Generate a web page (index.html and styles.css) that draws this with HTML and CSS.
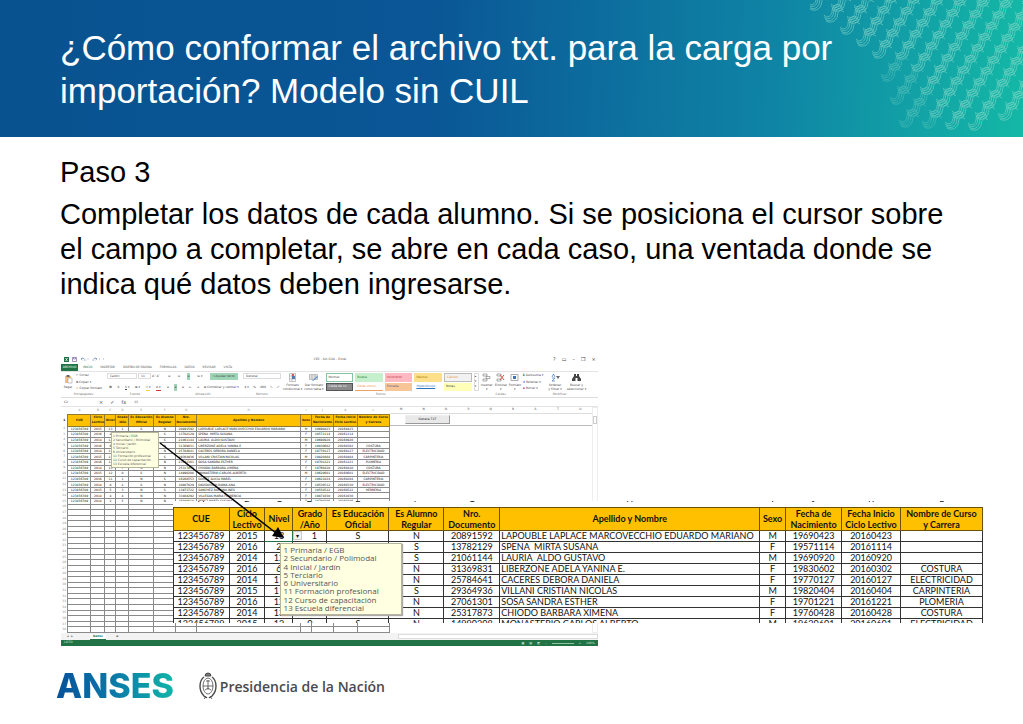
FILE: index.html
```html
<!doctype html>
<html lang="es">
    <head>
        <meta charset="UTF-8" />
        <meta name="viewport" content="width=device-width, initial-scale=1.0" />
        <title>ANSES - Modelo sin CUIL</title>
        <link rel="stylesheet" href="styles.css">
    </head>
    <body>
        <header class="banner">
            <svg class="waves" id="waves" width="213" height="137" viewBox="0 0 213 137" aria-hidden="true">
                <defs>
                    <g id="wave">
                        <path d="M-10 3C-6 7 -3 4 -2 0C-2 -6 3 -10 8 -6" />
                        <path d="M-10 5C-5 9 -1 5 -0.500 1C0 -5 4 -8 9 -4" />
                        <path d="M-9 7C-4 11 1 7 1.500 2C2 -3 5 -6 9 -2" />
                        <path d="M-8 9C-3 12 3 9 3.500 3C4 -1 6 -3 10 0" />
                    </g>
                </defs>
            </svg>
            <h1>¿Cómo conformar el archivo txt. para la carga por importación? Modelo sin CUIL</h1>
        </header>

        <main>
            <div class="text">
                <p>Paso 3</p>
                <p>Completar los datos de cada alumno. Si se posiciona el cursor sobre el campo a completar, se abre en cada caso, una ventada donde se indica qué datos deben ingresarse.</p>
            </div>

            <div class="figure">
                <div class="excel">
                    <div class="titlebar">
                        <svg class="quick" width="46" height="7" viewBox="0 0 46 7">
                            <rect x="3" y="1" width="5" height="5" fill="#217346" />
                            <path d="M4.500 2l2 3m0-3l-2 3" stroke="#fff" stroke-width=".7" />
                            <path d="M11.500 1.500h4v4h-4zM12.500 1.500v1.500h2v-1.500" fill="none" stroke="#7a6aa5" stroke-width=".7" />
                            <path d="M20 3q4-2 4 2M20 3l1.500-1.500M20 3l1.500 1M36 3q-4-2-4 2M36 3l-1.500-1.500M36 3l-1.500 1M26.500 3h1M38 3h1M42 3h1" fill="none" stroke="#7791b5" stroke-width=".7" />
                        </svg>
                        <span class="doc-title">CEC - Sin CUIL - Excel</span>
                        <span class="win"><i>?</i><i>▭</i><i>–</i><i>❐</i><i>×</i></span>
                    </div>
                    <nav class="tabs">
                        <a class="file" href="#">ARCHIVO</a>
                        <a class="current" href="#">INICIO</a>
                        <a href="#">INSERTAR</a>
                        <a href="#">DISEÑO DE PÁGINA</a>
                        <a href="#">FÓRMULAS</a>
                        <a href="#">DATOS</a>
                        <a href="#">REVISAR</a>
                        <a href="#">VISTA</a>
                    </nav>
                    <div class="ribbon">
                        <div class="group clipboard">
                            <div class="tools">
                                <button class="big">
                                    <svg width="9" height="9" viewBox="0 0 9 9"><path d="M1 1h6v7H1z" fill="#efc477" /><path d="M2.500 0h3v2h-3z" fill="#666" /><path d="M4 3h4v5H4z" fill="#fff" stroke="#888" stroke-width=".5" /></svg>
                                    Pegar
                                </button>
                                <div class="stack">
                                    <button>✂ Cortar</button>
                                    <button>⧉ Copiar ▾</button>
                                    <button><b class="amber">✔</b> Copiar formato</button>
                                </div>
                            </div>
                            <div class="caption">Portapapeles</div>
                        </div>
                        <div class="group font">
                            <div class="tools rows">
                                <div class="line">
                                    <select class="family" aria-label="Fuente"><option>Calibri</option></select>
                                    <select class="size" aria-label="Tamaño"><option>11</option></select>
                                    <button>A˄</button><button>A˅</button>
                                </div>
                                <div class="line spread">
                                    <button><b>N</b></button><button><i>K</i></button><button><u>S</u> ▾</button><button>⊞ ▾</button>
                                    <button class="fill">◇ ▾</button><button class="ink">A ▾</button>
                                </div>
                            </div>
                            <div class="caption">Fuente</div>
                        </div>
                        <div class="group align">
                            <div class="tools rows">
                                <div class="line spread">
                                    <button>≡</button><button>≡</button><button class="on">≡</button><button>≫ ▾</button>
                                    <button class="on wide">⎘ Ajustar texto</button>
                                </div>
                                <div class="line spread">
                                    <button>≡</button><button class="on">≡</button><button>≡</button><button>⇤</button><button>⇥</button>
                                    <button class="wide">⊟ Combinar y centrar ▾</button>
                                </div>
                            </div>
                            <div class="caption">Alineación</div>
                        </div>
                        <div class="group number">
                            <div class="tools rows">
                                <div class="line">
                                    <select class="format" aria-label="Formato de número"><option>General</option></select>
                                </div>
                                <div class="line spread"><button>$ ▾</button><button>%</button><button>000</button><button>⁰₀</button><button>₀⁰</button></div>
                            </div>
                            <div class="caption">Número</div>
                        </div>
                        <div class="group styles">
                            <div class="tools">
                                <button class="big">
                                    <svg width="9" height="9" viewBox="0 0 9 9"><path d="M1.500.5h6v8h-6zM1.500 3h6M1.500 6h6M4 .5v8" fill="#fff" stroke="#888" stroke-width=".5" /><path d="M4 1h2v2H4z" fill="#d65a5a" /><path d="M4 3h3v3H4z" fill="#4f7bb8" /></svg>
                                    Formato<br>condicional ▾
                                </button>
                                <button class="big">
                                    <svg width="9" height="9" viewBox="0 0 9 9"><path d="M.5 1.500h8v5h-8zM.5 3h8M.5 5h8M3 1.500v5M6 1.500v5" fill="#fff" stroke="#888" stroke-width=".5" /><path d="M3 8l5-5 1 1-5 4z" fill="#5b8fd0" /></svg>
                                    Dar formato<br>como tabla ▾
                                </button>
                                <div class="gallery">
                                    <button class="normal">Normal</button>
                                    <button class="good">Buena</button>
                                    <button class="bad">Incorrecto</button>
                                    <button class="neutral">Neutral</button>
                                    <button class="calc">Cálculo</button>
                                    <button class="check">Celda de co...</button>
                                    <button class="linked">Celda vincul...</button>
                                    <button class="input">Entrada</button>
                                    <button class="hyper">Hipervínculo</button>
                                    <button class="notes">Notas</button>
                                </div>
                                <div class="scroller"><i>▴</i><i>▾</i><i>▾</i></div>
                            </div>
                            <div class="caption">Estilos</div>
                        </div>
                        <div class="group cells">
                            <div class="tools">
                                <button class="big">
                                    <svg width="9" height="9" viewBox="0 0 9 9"><path d="M1 1h4v2H1zM1 6h4v2H1zM4 3.500h4v2H4z" fill="#fff" stroke="#777" stroke-width=".6" /></svg>
                                    Insertar<br>▾
                                </button>
                                <button class="big">
                                    <svg width="9" height="9" viewBox="0 0 9 9"><path d="M1 1h4v2H1zM1 6h4v2H1z" fill="#fff" stroke="#777" stroke-width=".6" /><path d="M4 2l4 5m0-5l-4 5" stroke="#d0553f" /></svg>
                                    Eliminar<br>▾
                                </button>
                                <button class="big">
                                    <svg width="9" height="9" viewBox="0 0 9 9"><path d="M1 1.500h7v6H1z" fill="#fff" stroke="#777" stroke-width=".6" /><path d="M3 3h3v3H3z" fill="#3f75b8" /></svg>
                                    Formato<br>▾
                                </button>
                            </div>
                            <div class="caption">Celdas</div>
                        </div>
                        <div class="group edit">
                            <div class="tools">
                                <div class="stack">
                                    <button><b>Σ</b> Autosuma ▾</button>
                                    <button>⬇ Rellenar ▾</button>
                                    <button><b class="pink">◆</b> Borrar ▾</button>
                                </div>
                                <button class="big">
                                    <svg width="9" height="9" viewBox="0 0 9 9"><path d="M1 4l1.500-3L4 4M1 5h3L1 8h3" fill="none" stroke="#3f75b8" stroke-width=".7" /><path d="M5 3h4L7 6z" fill="#666" /></svg>
                                    Ordenar<br>y filtrar ▾
                                </button>
                                <button class="big">
                                    <svg width="9" height="9" viewBox="0 0 9 9"><path d="M2 1h2v2h1V1h2v2l2 3v2H5.500V5h-2v3H0V6l2-3z" fill="#444" /></svg>
                                    Buscar y<br>seleccionar ▾
                                </button>
                            </div>
                            <div class="caption">Modificar</div>
                        </div>
                    </div>
                    <div class="formula">
                        <input class="cell-name" aria-label="Celda" value="C2">
                        <span class="fx"><i>×</i><i>✓</i><i>fx</i></span>
                        <input class="cell-value" aria-label="Valor" value="13">
                    </div>
                    <div class="sheet">
                        <div class="small-wrap">
                            <table class="small" id="small"></table>
                            <div class="tip tip-small">
                                <span>1 Primaria / EGB</span>
                                <span>2 Secundario / Polimodal</span>
                                <span>4 Inicial / Jardín</span>
                                <span>5 Terciario</span>
                                <span>6 Universitario</span>
                                <span>11 Formación profesional</span>
                                <span>12 Curso de capacitación</span>
                                <span>13 Escuela diferencial</span>
                            </div>
                        </div>
                        <div class="empty">
                            <div class="letters"><span>M</span><span>N</span><span>O</span><span>P</span><span>Q</span><span>R</span><span>S</span><span>T</span><span>U</span></div>
                            <div class="frozen"><button class="generate">Genera TXT</button></div>
                        </div>
                        <div class="scrollbar"><i></i></div>
                    </div>
                    <div class="sheets">
                        <span class="arrows">◂ &nbsp; ▸</span>
                        <a href="#">Datos</a>
                        <span>⊕</span>
                        <span class="hscroll"></span>
                    </div>
                    <div class="status">
                        <span>LISTO</span>
                        <span class="views"><i>▦</i><i>▤</i><i>◩</i><i>–</i><i class="zoom"></i><i>+</i><i>100%</i></span>
                    </div>
                </div>

                <div class="detail">
                    <table class="large" id="large"></table>
                    <div class="tip tip-large">
                        <span>1 Primaria / EGB</span>
                        <span>2 Secundario / Polimodal</span>
                        <span>4 Inicial / Jardín</span>
                        <span>5 Terciario</span>
                        <span>6 Universitario</span>
                        <span>11 Formación profesional</span>
                        <span>12 Curso de capacitación</span>
                        <span>13 Escuela diferencial</span>
                    </div>
                </div>

                <svg class="arrow" width="230" height="190" viewBox="0 0 230 190" aria-hidden="true">
                    <path d="M99 89L215 179" stroke="#000" stroke-width="1.500" />
                    <path d="M223 184l-12-2 6-9z" />
                </svg>
            </div>
        </main>

        <footer>
            <span class="anses">ANSES</span>
            <span class="nation">
                <svg width="18" height="28" viewBox="0 0 18 28" fill="none" stroke="#4a4a4c">
                    <path d="M6 4q0-3 3-3t3 3z" fill="#77787a" />
                    <ellipse cx="9" cy="14" rx="5" ry="8" stroke-width=".8" />
                    <path d="M5 5q-4 3-4 9t4 10l3 2M13 5q4 3 4 9t-4 10l-3 2" stroke-width="1.400" />
                    <path d="M9 8v10M4 14h10M7 9h4M6 18l3-2 3 2M7 24l-2 3M11 24l2 3" stroke-width=".8" />
                </svg>
                Presidencia de la Nación
            </span>
        </footer>

        <script src="script.js"></script>
    </body>
</html>
```
FILE: styles.css
```css
* {
    box-sizing: border-box;
}

body {
    margin: 0;
    background: #fff;
    color: #000;
    font-family: 'Liberation Sans', Arial, sans-serif;
}

button,
select,
input {
    margin: 0;
    padding: 0;
    border: 0;
    background: none;
    color: inherit;
    font: inherit;
    appearance: none;
}

i {
    font-style: normal;
}

/* banner */
.banner {
    position: relative;
    height: 137px;
    padding: 26px 150px 0 60px;
    background: linear-gradient(92deg, #08528f 0%, #0a5696 42%, #0f85a5 76%, #12a3a6 90%, #14b8a6 100%);
    color: #fff;
}

.banner h1 {
    position: relative;
    margin: 0;
    font-size: 35px;
    line-height: 43px;
    font-weight: normal;
}

.waves {
    position: absolute;
    top: 0;
    right: 0;
    fill: none;
    stroke: #8fdccb;
    stroke-width: 0.9;
}

/* text */
.text {
    padding: 18px 60px 0;
    font-size: 29px;
    line-height: 35px;
}

.text p {
    margin: 0 0 7px;
}

/* spreadsheet */
.figure {
    position: relative;
    margin: 52px 40px 0 61px;
}

.excel {
    width: 58.2%;
    background: #fff;
    color: #444;
    font-family: 'DejaVu Sans', sans-serif;
    font-size: 3px;
    line-height: 5px;
}

.titlebar {
    display: flex;
    justify-content: space-between;
    align-items: center;
    height: 10px;
}

.win {
    display: flex;
    gap: 6px;
    padding-right: 2px;
    font-size: 5px;
}

.tabs {
    display: flex;
    align-items: center;
    gap: 8px;
    height: 7px;
}

.tabs a {
    color: #555;
    text-decoration: none;
    line-height: 7px;
}

.tabs .file {
    width: 17px;
    margin-right: -3px;
    background: #217346;
    color: #fff;
    text-align: center;
}

.tabs .current {
    color: #217346;
}

.ribbon {
    display: flex;
    height: 27px;
    border-top: 1px solid #e3e3e3;
    border-bottom: 1px solid #ddd;
}

.group {
    display: flex;
    flex-direction: column;
    justify-content: space-between;
    min-width: 0;
    white-space: nowrap;
}

.clipboard { flex: 45; }
.font { flex: 58; }
.align { flex: 78; }
.number { flex: 40; }
.styles { flex: 198; }
.cells { flex: 42; }
.edit { flex: 76; }

.tools {
    display: flex;
    gap: 2px;
    height: 20px;
    padding: 1px;
}

.tools.rows {
    flex-direction: column;
    justify-content: space-between;
}

.line {
    display: flex;
    gap: 1px;
    height: 7px;
}

.spread {
    justify-content: space-around;
}

.caption {
    text-align: center;
    color: #777;
}

.big {
    display: block;
    min-width: 12px;
    line-height: 4px;
    text-align: center;
}

.big svg {
    display: block;
    margin: 0 auto 1px;
}

.stack {
    display: flex;
    flex-direction: column;
    justify-content: space-between;
    align-items: flex-start;
}

.edit .tools {
    gap: 5px;
}

.line select {
    height: 6px;
    padding-left: 2px;
    border: 1px solid #ddd;
    line-height: 4px;
}

.family { width: 30px; }
.size { width: 13px; }
.format { width: 38px; }

.fill { border-bottom: 1px solid #f3d53b; }
.ink { border-bottom: 1px solid #d33; }
.on { background: #9fd5b7; }
.wide { min-width: 28px; }
.amber { color: #d9a441; }
.pink { color: #d0609a; }

.gallery {
    display: grid;
    flex: 1;
    grid-template-columns: repeat(5, 1fr);
    gap: 1px 2px;
}

.gallery button {
    padding-left: 2px;
    text-align: left;
}

.normal { border: 1px solid #86c5a4; }
.good { background: #c6efce; color: #2a7a2a; }
.bad { background: #ffb9c1; color: #b8303a; }
.neutral { background: #ffe08a; color: #a87400; }
.calc { border: 1px solid #bbb; background: #f2f2f2; color: #ee8a2a; }
.check { border: 1px solid #555; background: #8a8a8a; color: #fff; }
.linked { border-bottom: 1px solid #f0a060; color: #f08a3a; }
.input { background: #f7c596; color: #5a5a8a; }
.hyper { color: #2f6fc0; text-decoration: underline; }
.notes { background: #ffffb8; }

.scroller {
    display: flex;
    flex-direction: column;
    width: 5px;
    border: 1px solid #ddd;
}

.formula {
    display: flex;
    align-items: center;
    height: 9px;
    border-bottom: 1px solid #e3e3e3;
}

.cell-name {
    width: 30px;
    padding-left: 3px;
}

.fx {
    display: flex;
    gap: 7px;
    padding: 0 8px;
    font-size: 5px;
}

.cell-value {
    flex: 1;
    min-width: 0;
}

.sheet {
    display: flex;
    height: 226px;
}

.small-wrap {
    position: relative;
    width: 61.3%;
}

table {
    width: 100%;
    border-collapse: collapse;
    table-layout: fixed;
}

th,
td {
    padding: 0;
    text-align: center;
    white-space: nowrap;
}

.small {
    height: 226px;
    color: #111;
}

.small td,
.small thead th {
    border: 1px solid #8a8a8a;
    line-height: 4px;
}

.small .letters-row th,
.small .row-number {
    border: 0;
    color: #888;
    font-weight: normal;
}

.small .letters-row {
    height: 7px;
}

.small .titles {
    height: 12px;
}

.small .titles th {
    background: #ffc000;
    border-color: #927a30;
    color: #2b2000;
    font-weight: bold;
    line-height: 5px;
    white-space: pre;
}

.small .titles .row-number {
    background: none;
}

td.name {
    padding-left: 1px;
    text-align: left;
    white-space: pre;
}

.empty {
    flex: 1;
}

.letters {
    display: flex;
    height: 7px;
    border-bottom: 1px solid #ddd;
}

.letters span {
    flex: 1;
    text-align: center;
}

.frozen {
    height: 12px;
    padding: 1px 15px;
    border-bottom: 1px solid #bbb;
}

.generate {
    display: block;
    width: 45px;
    height: 9px;
    border: 1px solid #999;
    border-top-color: #eee;
    border-left-color: #eee;
    background: #e9e9e9;
    color: #111;
}

.scrollbar {
    width: 6px;
    padding-top: 8px;
    border: 1px solid #eee;
}

.scrollbar i {
    display: block;
    height: 8px;
    border: 1px solid #ccc;
}

.sheets {
    display: flex;
    align-items: center;
    gap: 10px;
    height: 7px;
    background: #f3f3f3;
}

.arrows {
    width: 19px;
    padding-left: 6px;
}

.sheets a {
    width: 16px;
    border-bottom: 1px solid #217346;
    background: #fff;
    color: #217346;
    font-weight: bold;
    text-align: center;
    text-decoration: none;
}

.hscroll {
    width: 200px;
    height: 5px;
    margin-left: auto;
    border: 1px solid #ddd;
    background: #fff;
}

.status {
    display: flex;
    justify-content: space-between;
    height: 6px;
    padding: 0 3px;
    background: #217346;
    color: #d5e8dc;
}

.views {
    display: flex;
    align-items: center;
    gap: 5px;
}

.zoom {
    width: 22px;
    height: 1px;
    background: #8fc0a4;
}

/* enlarged rows */
.detail {
    position: absolute;
    top: 147px;
    right: 0;
    width: 87.9%;
    height: 122px;
    overflow: hidden;
    background: #fff;
    font-family: Lato, sans-serif;
    font-size: 9px;
    line-height: 10px;
}

.large {
    margin-top: -6px;
    color: #111;
}

.large .letters-row {
    height: 12px;
}

.large .letters-row th {
    border: 0;
    font-weight: normal;
    line-height: 8px;
    vertical-align: top;
}

.large .titles {
    height: 22px;
}

.large .titles th {
    border: 1px solid #6b5200;
    background: #ffc000;
    font-weight: bold;
    line-height: 11px;
    white-space: pre;
}

.large td {
    height: 11px;
    border: 1px solid #333;
}

.large td.active {
    border: 1px solid #217346;
}

.tip {
    position: absolute;
    display: flex;
    flex-direction: column;
    justify-content: space-between;
    border: 1px solid #b5b59a;
    background: #ffffe1;
    color: #555;
    white-space: nowrap;
}

.tip-small {
    top: 25px;
    left: 50px;
    width: 48px;
    height: 36px;
    padding: 1px;
    line-height: 4px;
}

.tip-large {
    top: 42px;
    left: 107px;
    width: 122px;
    height: 72px;
    padding: 2px 3px;
    box-shadow: 1px 1px 1px #aaa;
    font-family: 'Open Sans', sans-serif;
    font-size: 8px;
    line-height: 8px;
}

.drop {
    float: left;
    width: 9px;
    border: 1px solid #ccc;
    background: #f2f2f2;
    font-size: 6px;
    line-height: 7px;
}

.arrow {
    position: absolute;
    top: 0;
    left: 0;
}

/* logos */
footer {
    display: flex;
    align-items: center;
    gap: 25px;
    padding: 22px 56px 0;
}

.anses {
    background: linear-gradient(90deg, #07519a, #0a7aa8 50%, #10b5a8);
    background-clip: text;
    color: transparent;
    font-family: Inter, sans-serif;
    font-size: 34px;
    line-height: 36px;
    font-weight: 800;
}

.nation {
    display: flex;
    align-items: center;
    gap: 3px;
    color: #4a4a4c;
    font-family: 'Open Sans', sans-serif;
    font-size: 14px;
    font-weight: 600;
}
```
FILE: script.js
```js
const titles = ['CUE', 'Ciclo\nLectivo', 'Nivel', 'Grado\n/Año', 'Es Educación\nOficial', 'Es Alumno\nRegular', 'Nro.\nDocumento', 'Apellido y Nombre', 'Sexo', 'Fecha de\nNacimiento', 'Fecha Inicio\nCiclo Lectivo', 'Nombre de Curso\ny Carrera']

const students = [
    [2015, 13, 1, 'S', 'N', '20891592', 'LAPOUBLE LAPLACE MARCOVECCHIO EDUARDO MARIANO', 'M', '19690423', '20160423', ''],
    [2016, 2, 1, 'S', 'S', '13782129', 'SPENA  MIRTA SUSANA', 'F', '19571114', '20161114', ''],
    [2014, 12, 2, 'N', 'S', '21061144', 'LAURIA  ALDO GUSTAVO', 'M', '19690920', '20160920', ''],
    [2016, 6, 3, 'S', 'N', '31369831', 'LIBERZONE ADELA YANINA E.', 'F', '19830602', '20160302', 'COSTURA'],
    [2014, 11, 4, 'S', 'N', '25784641', 'CACERES DEBORA DANIELA', 'F', '19770127', '20160127', 'ELECTRICIDAD'],
    [2015, 11, 5, 'N', 'S', '29364936', 'VILLANI CRISTIAN NICOLAS', 'M', '19820404', '20160404', 'CARPINTERIA'],
    [2016, 12, 6, 'S', 'N', '27061301', 'SOSA SANDRA ESTHER', 'F', '19701221', '20161221', 'PLOMERIA'],
    [2014, 13, 7, 'N', 'N', '25317873', 'CHIODO BARBARA XIMENA', 'F', '19760428', '20160428', 'COSTURA'],
    [2015, 12, 0, 'S', 'N', '14990208', 'MONASTERIO CARLOS ALBERTO', 'M', '19620601', '20160601', 'ELECTRICIDAD'],
    [2016, 11, 1, 'N', 'S', '16268553', 'GOMEZ ALICIA MABEL', 'F', '19621024', '20160204', 'CARPINTERIA'],
    [2014, 8, 2, 'S', 'N', '10807029', 'DAVIDOVICH DIANA ANA', 'F', '19530512', '20160330', 'ELECTRICIDAD'],
    [2015, 5, 3, 'N', 'S', '13973722', 'SANCHEZ RAMONA INES', 'F', '19550522', '20160522', 'HERRERIA'],
    [2014, 4, 4, 'N', 'N', '33404292', 'VILLEGAS MARIA FLORENCIA', 'F', '19871030', '20161030', ''],
    [2014, 2, 5, 'N', 'N', '16089010', 'PEREZ MARTA SUSANA', 'F', '19790306', '20160306', ''],
]

function buildTable(id, widths, rowCount, numbered) {
    const total = widths.reduce((a, b) => a + b)
    const letters = 'ABCDEFGHIJKL'.split('')
    const corner = (text) => (numbered ? `<th class="row-number">${text}</th>` : '')

    let html = '<colgroup>'
    html += widths.map((w) => `<col style="width: ${(w / total) * 100}%">`).join('')
    html += '</colgroup><thead><tr class="letters-row">' + corner('')
    html += letters.map((l) => `<th>${l}</th>`).join('')
    html += '</tr><tr class="titles">' + corner(1)
    html += titles.map((t) => `<th>${t}</th>`).join('')
    html += '</tr></thead><tbody>'

    for (let i = 0; i < rowCount; i++) {
        const student = students[i]
        const cells = student ? ['123456789', ...student] : Array(12).fill('')
        html += '<tr>' + corner(i + 2)
        cells.forEach((value, c) => {
            let cls = ''
            if (c === 7) cls = ' class="name"'
            if (i === 0 && c === 2) cls = ' class="active"'
            const drop = !numbered && i === 0 && c === 3 ? '<span class="drop">▾</span>' : ''
            html += `<td${cls}>${drop}${value}</td>`
        })
        html += '</tr>'
    }
    document.getElementById(id).innerHTML = html + '</tbody>'
}

buildTable('small', [7, 23, 14, 11, 13, 25, 22, 21, 104, 11, 22, 24, 32], 37, true)
buildTable('large', [56, 36, 28, 34, 62, 55, 56, 260, 26, 56, 59, 82], 9, false)

// woven pattern in the corner of the banner
const waves = document.getElementById('waves')
for (let a = -20; a < 30; a++) {
    for (let b = -24; b < 24; b++) {
        const x = 8 + a * 16 - b * 7
        const y = a * 12 + b * 11
        const left = y < 50 ? 4 + y * 1.33 : 70 + (y - 50) * 0.35
        if (x < left || x > 225 || y < -8 || y > 120 || y > 120 - (x - 200) * 0.7) continue
        const use = document.createElementNS('http://www.w3.org/2000/svg', 'use')
        use.setAttribute('href', '#wave')
        use.setAttribute('x', x)
        use.setAttribute('y', y)
        use.setAttribute('opacity', y > 50 && x < left + 35 ? 0.35 : 0.6)
        waves.appendChild(use)
    }
}
```
